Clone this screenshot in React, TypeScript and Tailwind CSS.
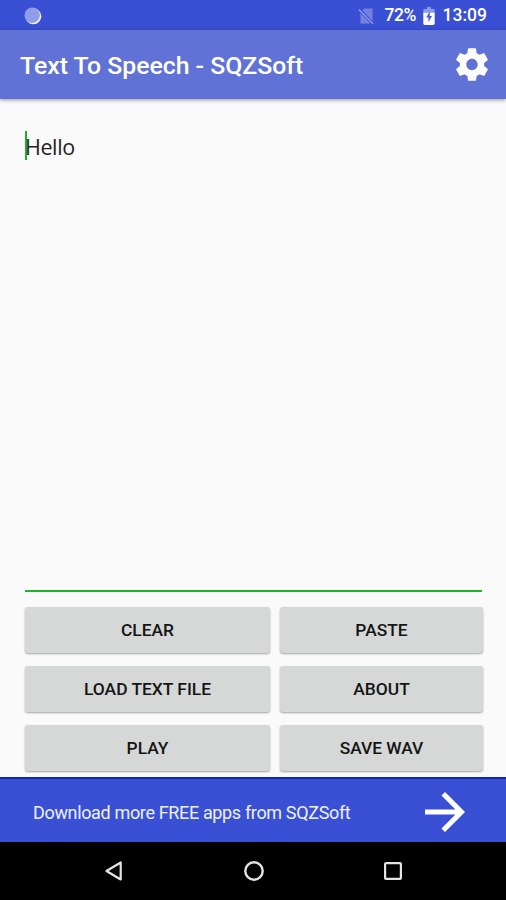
const BUTTONS = [
  ['Clear', 'Paste'],
  ['Load text file', 'About'],
  ['Play', 'Save wav'],
]

function StatusBar() {
  return (
    <div className="flex h-[30px] shrink-0 items-center bg-[#3a50d4] pt-px pr-[19px] pl-6 text-white">
      <svg className="h-[18px] w-[18px]" viewBox="0 0 18 18">
        <circle cx="9.3" cy="9.3" r="8" fill="#f4f5ff" />
        <circle cx="8.2" cy="8.2" r="7.7" fill="#919de8" />
      </svg>
      <svg className="ml-auto h-4 w-4" viewBox="0 0 16 16">
        <path d="M6 0.500h8.500V13L4.500 2.500zM2.500 5 12.500 15.500h-10z" fill="#7482de" />
        <path d="M.8 1.500 15 15.800" stroke="#8d99e6" strokeWidth="1.300" />
      </svg>
      <span className="ml-[11px] w-8 text-[17.500px] leading-none font-medium tracking-[-0.500px] whitespace-nowrap">72%</span>
      <svg className="ml-[6px] h-[18px] w-3" viewBox="0 0 12 19">
        <path d="M4 0h4v2h2.800q1.200 0 1.200 1.200V7H0V3.200Q0 2 1.200 2H4z" fill="#8e9be9" />
        <path d="M0 6h12v11.500Q12 19 10.500 19h-9Q0 19 0 17.500z" fill="#fff" />
        <path d="M6.800 4.500 3 11h2.400v5L9.200 9.500H6.800z" fill="#4a5ed8" />
      </svg>
      <span className="ml-2 text-[17.500px] leading-none font-medium">13:09</span>
    </div>
  )
}

function AppBar() {
  return (
    <header className="z-10 flex h-[69px] shrink-0 items-center justify-between bg-[#6072d6] pr-[14px] pl-[20px] text-white shadow-[0_1px_4px_rgba(0,0,0,0.4)]">
      <h1 className="pt-[2px] text-[24.800px] font-medium whitespace-nowrap">Text To Speech - SQZSoft</h1>
      <svg className="h-[39px] w-[40px]" viewBox="0 0 24 24" fill="currentColor">
        <path d="M19.43 12.98c.04-.32.07-.64.07-.98s-.03-.66-.07-.98l2.110-1.650c.19-.15.24-.42.12-.64l-2-3.460c-.12-.22-.39-.3-.61-.22l-2.490 1c-.52-.4-1.080-.73-1.690-.98l-.38-2.650C14.460 2.180 14.250 2 14 2h-4c-.25 0-.46.18-.49.42l-.38 2.650c-.61.25-1.170.59-1.690.98l-2.490-1c-.23-.09-.49 0-.61.22l-2 3.460c-.13.22-.07.49.12.64l2.110 1.650c-.04.32-.07.65-.07.98s.03.66.07.98l-2.110 1.650c-.19.15-.24.42-.12.64l2 3.460c.12.22.39.3.61.22l2.490-1c.52.4 1.080.73 1.690.98l.38 2.650c.03.24.24.42.49.42h4c.25 0 .46-.18.49-.42l.38-2.650c.61-.25 1.170-.59 1.690-.98l2.490 1c.23.09.49 0 .61-.22l2-3.460c.12-.22.07-.49-.12-.64l-2.110-1.650zM12 15.500c-1.930 0-3.500-1.570-3.500-3.500s1.570-3.500 3.500-3.500 3.500 1.570 3.500 3.500-1.570 3.500-3.500 3.500z" />
      </svg>
    </header>
  )
}

function Banner() {
  return (
    <div className="flex h-[65px] shrink-0 items-center justify-between border-t-2 border-[#1326b4] bg-[#3a50d4] pr-[31px] pl-[33px] text-white">
      <span className="pt-1 text-[18px] tracking-[-0.350px] whitespace-nowrap text-[#eef0ff]">
        Download more FREE apps from SQZSoft
      </span>
      <svg className="mt-[3px] h-[60px] w-[60px]" viewBox="0 0 24 24" fill="currentColor">
        <path d="M12 4l-1.410 1.410L16.170 11H4v2h12.170l-5.580 5.590L12 20l8-8z" />
      </svg>
    </div>
  )
}

function NavBar() {
  return (
    <nav className="flex h-[58px] shrink-0 items-center justify-between bg-black pr-[102px] pl-[103px] text-[#e4e4e4]">
      <svg className="h-[22px] w-[22px]" viewBox="0 0 22 22" fill="none" stroke="currentColor" strokeWidth="2.200" strokeLinejoin="round">
        <path d="M17.700 2.500v17L3.500 11z" />
      </svg>
      <svg className="h-[22px] w-[22px]" viewBox="0 0 22 22" fill="none" stroke="currentColor" strokeWidth="2.400">
        <circle cx="11" cy="11" r="8.700" />
      </svg>
      <svg className="h-[22px] w-[22px]" viewBox="0 0 22 22" fill="none" stroke="currentColor" strokeWidth="2.200">
        <rect x="3.100" y="3.100" width="15.800" height="15.800" rx="1" />
      </svg>
    </nav>
  )
}

export default function App() {
  return (
    <div className="flex h-[900px] w-[506px] flex-col overflow-hidden bg-[#fafafa] font-['Roboto',sans-serif]">
      <StatusBar />
      <AppBar />
      <main className="flex min-h-0 flex-1 flex-col pt-8 pr-6 pl-[25px]">
        <div className="flex h-[461px] shrink-0 items-start border-b-2 border-[#1fb428]">
          <span className="h-[29px] w-[2px] bg-[#16b51f]" />
          <span className="-ml-[2px] pt-px font-['Open_Sans','Noto_Sans',sans-serif] text-[21.500px] leading-[29px] tracking-[-0.400px] text-[#222]">
            Hello
          </span>
        </div>
        <div className="mt-[15px] grid grid-cols-[245px_203px] gap-x-[10px] gap-y-[13px]">
          {BUTTONS.flat().map((label) => (
            <button
              key={label}
              className="h-[46px] rounded-[3px] bg-[#d6d7d7] pt-px text-[17.400px] font-medium text-[#151515] uppercase shadow-[0_1px_2px_rgba(0,0,0,0.35)]"
            >
              {label}
            </button>
          ))}
        </div>
      </main>
      <Banner />
      <NavBar />
    </div>
  )
}
